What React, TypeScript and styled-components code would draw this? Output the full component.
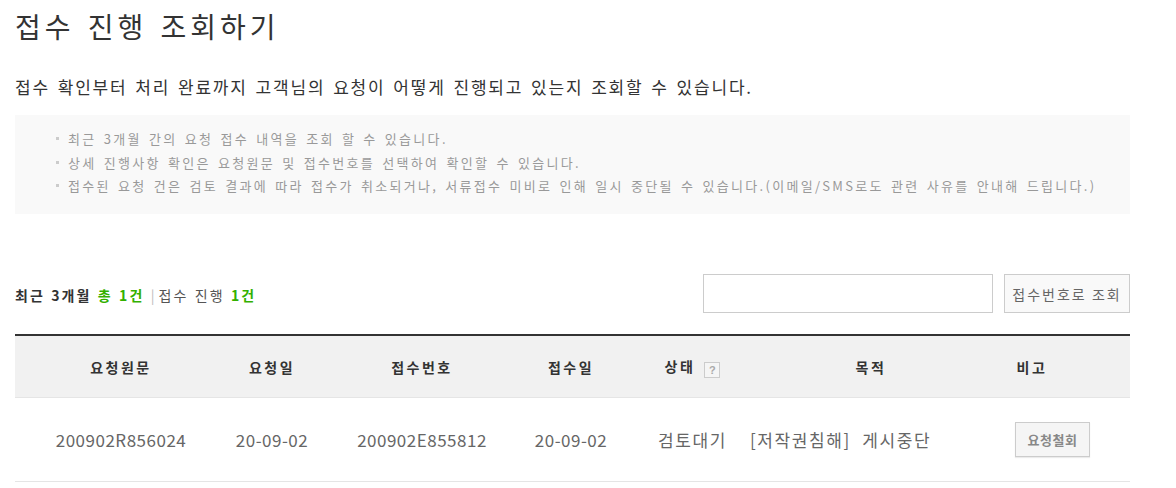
import styled, { createGlobalStyle } from "styled-components";

const GlobalStyle = createGlobalStyle`
  body {
    margin: 0;
    background: #fff;
    font-family: "Noto Sans CJK KR", "Noto Sans", sans-serif;
    color: #333;
  }
`;

const Page = styled.div`
  width: 1115px;
  margin-left: 15px;
  padding-top: 6px;
`;

const Title = styled.h1`
  margin: 0;
  font-size: 28px;
  line-height: 40px;
  font-weight: 400;
  letter-spacing: 4px;
  word-spacing: 3px;
  color: #333;
`;

const Lead = styled.p`
  margin: 29px 0 0;
  font-size: 17px;
  line-height: 24px;
  letter-spacing: 1.85px;
  word-spacing: 2px;
  color: #333;
`;

const InfoBox = styled.ul`
  margin: 16px 0 0;
  padding: 12px 0 16.5px 41px;
  list-style: none;
  background: #f9f9f9;
`;

const InfoItem = styled.li`
  display: flex;
  align-items: center;
  font-size: 13px;
  line-height: 23.5px;
  letter-spacing: 2.3px;
  word-spacing: 2px;
  color: #999;
  white-space: pre;

  &::before {
    content: "";
    width: 3px;
    height: 3px;
    background: #ccc;
    margin-right: 9px;
  }
`;

const SummaryBar = styled.div`
  display: flex;
  align-items: center;
  margin-top: 60px;
  height: 39px;
`;

const Summary = styled.div`
  flex: 1;
  font-size: 14px;
  letter-spacing: 2.1px;
  word-spacing: 1px;
  color: #555;
  padding-top: 2px;

  b {
    color: #333;
  }

  em {
    font-style: normal;
    font-weight: 700;
    color: #33b000;
  }

  .bar {
    color: #bbb;
    margin: 0 2px 0 0;
  }
`;

const SearchInput = styled.input`
  box-sizing: border-box;
  width: 290px;
  height: 39px;
  border: 1px solid #ccc;
  margin: 0;
  padding: 0 10px;
  font-size: 14px;
  outline: none;
`;

const SearchButton = styled.button`
  box-sizing: border-box;
  width: 126px;
  height: 39px;
  margin-left: 11px;
  border: 1px solid #ccc;
  background: #f9f9f9;
  font-family: inherit;
  font-size: 14px;
  letter-spacing: 2px;
  color: #666;
  padding: 0;
  cursor: pointer;
`;

const Table = styled.table`
  width: 100%;
  margin-top: 21px;
  border-collapse: collapse;
  table-layout: fixed;
  border-top: 2px solid #333;
`;

const Th = styled.th<{ $pl?: number; $pr?: number }>`
  height: 61px;
  padding: 0 ${(p) => p.$pr ?? 0}px 0 ${(p) => p.$pl ?? 0}px;
  background: #f1f1f1;
  border-bottom: 1px solid #e5e5e5;
  font-size: 14px;
  font-weight: 700;
  letter-spacing: 2.5px;
  color: #333;
  text-align: center;
`;

const Td = styled.td<{ $align?: string; $pl?: number; $wide?: boolean }>`
  height: 83px;
  padding: 0 0 0 ${(p) => p.$pl ?? 0}px;
  border-bottom: 1px solid #e5e5e5;
  font-size: 17px;
  color: #666;
  letter-spacing: ${(p) => (p.$wide ? "1.6px" : "0.5px")};
  word-spacing: ${(p) => (p.$wide ? "6px" : "0")};
  text-align: ${(p) => p.$align ?? "center"};
  white-space: nowrap;
`;

const HelpIcon = styled.span`
  display: inline-flex;
  align-items: center;
  justify-content: center;
  box-sizing: border-box;
  width: 16px;
  height: 16px;
  margin-left: 9px;
  border: 1px solid #ccc;
  background: #f5f5f5;
  font-family: "Liberation Sans", sans-serif;
  font-size: 11px;
  font-weight: 700;
  letter-spacing: 0;
  color: #aaa;
  vertical-align: -2px;
`;

const CancelButton = styled.button`
  box-sizing: border-box;
  width: 75px;
  height: 35px;
  border: 1px solid #ccc;
  background: #f5f5f5;
  font-family: inherit;
  font-size: 13px;
  font-weight: 700;
  letter-spacing: 0.5px;
  color: #888;
  padding: 0;
  box-shadow: 0 1px 1px rgba(0, 0, 0, 0.08);
`;

const notices = [
  "최근 3개월 간의 요청 접수 내역을 조회 할 수 있습니다.",
  "상세 진행사항 확인은 요청원문 및 접수번호를 선택하여 확인할 수 있습니다.",
  "접수된 요청 건은 검토 결과에 따라 접수가 취소되거나, 서류접수 미비로 인해 일시 중단될 수 있습니다.(이메일/SMS로도 관련 사유를 안내해 드립니다.)",
];

export default function App() {
  return (
    <>
      <GlobalStyle />
      <Page>
        <Title>접수 진행 조회하기</Title>
        <Lead>
          접수 확인부터 처리 완료까지 고객님의 요청이 어떻게 진행되고 있는지 조회할 수 있습니다.
        </Lead>
        <InfoBox>
          {notices.map((n) => (
            <InfoItem key={n}>{n}</InfoItem>
          ))}
        </InfoBox>

        <SummaryBar>
          <Summary>
            <b>최근 3개월</b> <em>총 1건</em>{" "}
            <span className="bar">|</span>접수 진행 <em>1건</em>
          </Summary>
          <SearchInput type="text" />
          <SearchButton>접수번호로 조회</SearchButton>
        </SummaryBar>

        <Table>
          <colgroup>
            <col style={{ width: 212 }} />
            <col style={{ width: 90 }} />
            <col style={{ width: 210 }} />
            <col style={{ width: 88 }} />
            <col style={{ width: 125 }} />
            <col style={{ width: 220 }} />
            <col style={{ width: 170 }} />
          </colgroup>
          <thead>
            <tr>
              <Th>요청원문</Th>
              <Th>요청일</Th>
              <Th>접수번호</Th>
              <Th>접수일</Th>
              <Th $pl={30}>
                상태<HelpIcon>?</HelpIcon>
              </Th>
              <Th $pl={42}>목적</Th>
              <Th $pr={26}>비고</Th>
            </tr>
          </thead>
          <tbody>
            <tr>
              <Td>200902R856024</Td>
              <Td>20-09-02</Td>
              <Td>200902E855812</Td>
              <Td>20-09-02</Td>
              <Td $pl={30} $wide>
                검토대기
              </Td>
              <Td $align="left" $pl={10} $wide>
                [저작권침해] 게시중단
              </Td>
              <Td $align="left" $pl={55}>
                <CancelButton>요청철회</CancelButton>
              </Td>
            </tr>
          </tbody>
        </Table>
      </Page>
    </>
  );
}
